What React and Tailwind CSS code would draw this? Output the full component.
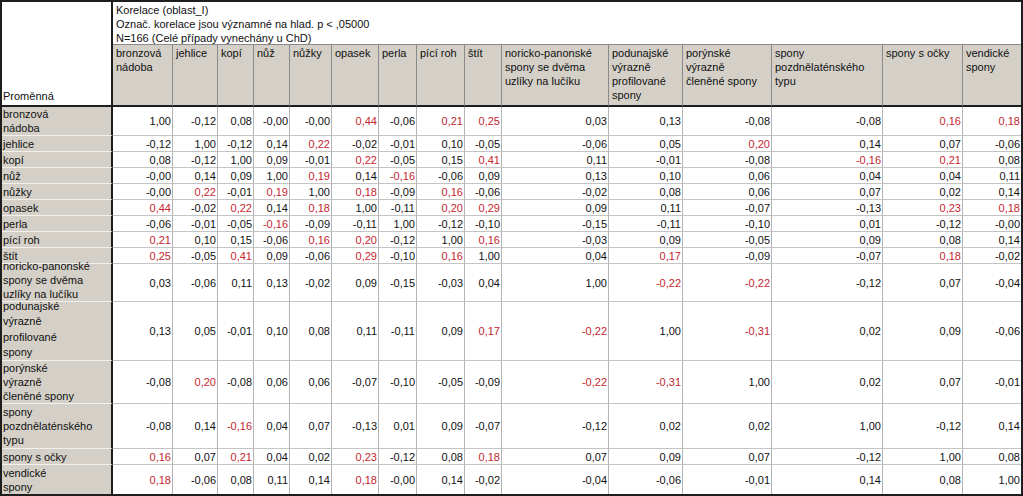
import React from 'react';

const columns = [
  ['bronzová', 'nádoba'],
  ['jehlice'],
  ['kopí'],
  ['nůž'],
  ['nůžky'],
  ['opasek'],
  ['perla'],
  ['pící roh'],
  ['štít'],
  ['noricko-panonské', 'spony se dvěma', 'uzlíky na lučíku'],
  ['podunajské', 'výrazně', 'profilované', 'spony'],
  ['porýnské', 'výrazně', 'členěné spony'],
  ['spony', 'pozdnělaténského', 'typu'],
  ['spony s očky'],
  ['vendické', 'spony'],
];

// one string per row, values in column order
const matrix = [
  '1,00 -0,12 0,08 -0,00 -0,00 0,44 -0,06 0,21 0,25 0,03 0,13 -0,08 -0,08 0,16 0,18',
  '-0,12 1,00 -0,12 0,14 0,22 -0,02 -0,01 0,10 -0,05 -0,06 0,05 0,20 0,14 0,07 -0,06',
  '0,08 -0,12 1,00 0,09 -0,01 0,22 -0,05 0,15 0,41 0,11 -0,01 -0,08 -0,16 0,21 0,08',
  '-0,00 0,14 0,09 1,00 0,19 0,14 -0,16 -0,06 0,09 0,13 0,10 0,06 0,04 0,04 0,11',
  '-0,00 0,22 -0,01 0,19 1,00 0,18 -0,09 0,16 -0,06 -0,02 0,08 0,06 0,07 0,02 0,14',
  '0,44 -0,02 0,22 0,14 0,18 1,00 -0,11 0,20 0,29 0,09 0,11 -0,07 -0,13 0,23 0,18',
  '-0,06 -0,01 -0,05 -0,16 -0,09 -0,11 1,00 -0,12 -0,10 -0,15 -0,11 -0,10 0,01 -0,12 -0,00',
  '0,21 0,10 0,15 -0,06 0,16 0,20 -0,12 1,00 0,16 -0,03 0,09 -0,05 0,09 0,08 0,14',
  '0,25 -0,05 0,41 0,09 -0,06 0,29 -0,10 0,16 1,00 0,04 0,17 -0,09 -0,07 0,18 -0,02',
  '0,03 -0,06 0,11 0,13 -0,02 0,09 -0,15 -0,03 0,04 1,00 -0,22 -0,22 -0,12 0,07 -0,04',
  '0,13 0,05 -0,01 0,10 0,08 0,11 -0,11 0,09 0,17 -0,22 1,00 -0,31 0,02 0,09 -0,06',
  '-0,08 0,20 -0,08 0,06 0,06 -0,07 -0,10 -0,05 -0,09 -0,22 -0,31 1,00 0,02 0,07 -0,01',
  '-0,08 0,14 -0,16 0,04 0,07 -0,13 0,01 0,09 -0,07 -0,12 0,02 0,02 1,00 -0,12 0,14',
  '0,16 0,07 0,21 0,04 0,02 0,23 -0,12 0,08 0,18 0,07 0,09 0,07 -0,12 1,00 0,08',
  '0,18 -0,06 0,08 0,11 0,14 0,18 -0,00 0,14 -0,02 -0,04 -0,06 -0,01 0,14 0,08 1,00',
].map((r) => r.split(' '));

// significant at p < .05 -> red
const isSignificant = (v) => {
  const n = Math.abs(parseFloat(v.replace(',', '.')));
  return n >= 0.155 && n < 1;
};

function Lines({ lines }) {
  return lines.map((l, i) => (
    <div key={i} className="whitespace-nowrap">
      {l}
    </div>
  ));
}

export default function App() {
  const lastRow = matrix.length - 1;
  const lastCol = columns.length - 1;

  return (
    <div className="w-[1023px] h-[496px] bg-white border-2 border-[#1e1e1e] font-['Liberation_Sans',Arial,sans-serif] text-[11px] leading-[14px] text-[#111]">
      <div className="grid grid-cols-[111px_60px_45px_36px_36px_42px_47px_38px_48px_37px_107px_74px_89px_111px_80px_58px] grid-rows-[43px_62px_29px_16px_16px_16px_16px_16px_16px_16px_16px_38px_59px_43px_45px_16px_29px]">
        {/* corner */}
        <div className="row-span-2 bg-white border-r-2 border-b-2 border-[#1e1e1e] flex items-end pl-[1px] pb-[2px]">
          Proměnná
        </div>

        {/* title */}
        <div className="col-span-15 bg-white border-b border-[#8a8a8a] pl-[3px] pt-[1px]">
          <div>Korelace (oblast_I)</div>
          <div>Označ. korelace jsou významné na hlad. p &lt; ,05000</div>
          <div>N=166 (Celé případy vynechány u ChD)</div>
        </div>

        {/* column headers */}
        {columns.map((c, i) => (
          <div
            key={'h' + i}
            className={`bg-[#d4d0c8] border-b-2 border-b-[#1e1e1e] pl-[3px] pt-[1px] ${
              i === lastCol ? '' : 'border-r border-r-[#8a8a8a]'
            }`}
          >
            <Lines lines={c} />
          </div>
        ))}

        {/* body */}
        {matrix.map((row, r) => (
          <React.Fragment key={'r' + r}>
            <div
              className={`bg-[#d4d0c8] border-r-2 border-r-[#1e1e1e] pl-[1px] flex flex-col justify-center ${
                r === lastRow ? '' : 'border-b border-b-[#f2f0ec]'
              } ${columns[r].length === 4 ? 'leading-[15.5px]' : ''}`}
            >
              <div className={r === 9 ? '-mt-[5px]' : r === 10 ? '-mt-[3px]' : ''}>
                <Lines lines={columns[r]} />
              </div>
            </div>
            {row.map((v, c) => (
              <div
                key={c}
                className={`flex items-center justify-end pr-[1px] ${
                  isSignificant(v) ? 'text-[#c4262e]' : 'text-[#111]'
                } ${c === lastCol ? '' : 'border-r border-r-[#b4b4b4]'} ${
                  r === lastRow ? '' : 'border-b border-b-[#c4c4c4]'
                }`}
              >
                {v}
              </div>
            ))}
          </React.Fragment>
        ))}
      </div>
    </div>
  );
}
